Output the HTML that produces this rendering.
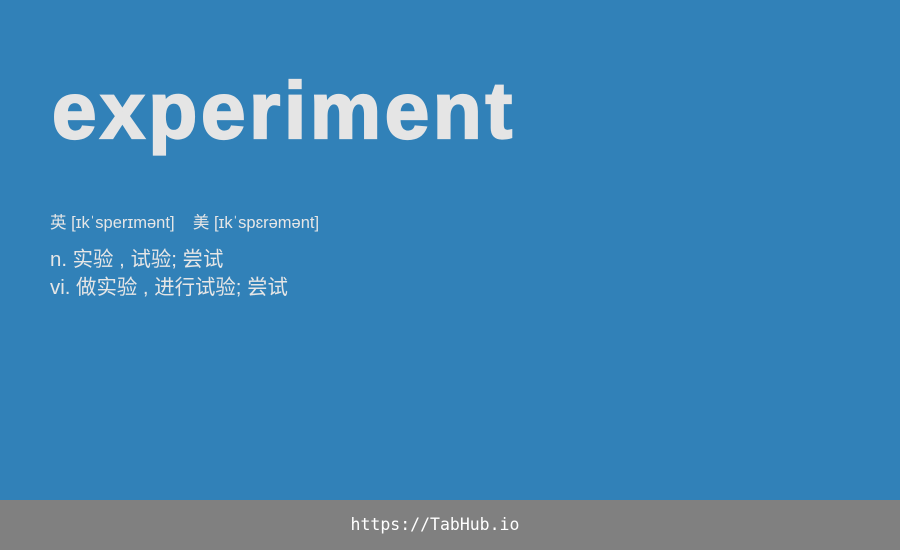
<!DOCTYPE html>
<html><head><meta charset="utf-8"><style>
html,body{margin:0;padding:0}
body{width:900px;height:550px;background:#3181b8;position:relative;overflow:hidden;font-family:"Liberation Sans","Noto Sans CJK SC",sans-serif;color:#e6e6e6}
.t{position:absolute;left:52px;top:56px;font-size:80px;font-weight:bold;line-height:110px;color:#e5e5e5;letter-spacing:3.7px;-webkit-text-stroke:2.2px #e5e5e5}
.ph{position:absolute;left:50px;top:212px;font-size:16.5px;line-height:22px}
.d{position:absolute;left:50px;top:246px;font-size:20.4px;line-height:28px}
.f{position:absolute;left:0;top:500px;width:870px;height:50px;background:#808080;color:#fff;font-family:"DejaVu Sans Mono",monospace;font-size:16.5px;line-height:50px;text-align:center;padding-right:30px}
</style></head><body>
<div class="t">experiment</div>
<div class="ph">英 [ɪkˈsperɪmənt]&nbsp;&nbsp;&nbsp; 美 [ɪkˈspɛrəmənt]</div>
<div class="d">n. 实验 , 试验; 尝试<br>vi. 做实验 , 进行试验; 尝试</div>
<div class="f">https://TabHub.io</div>
</body></html>
